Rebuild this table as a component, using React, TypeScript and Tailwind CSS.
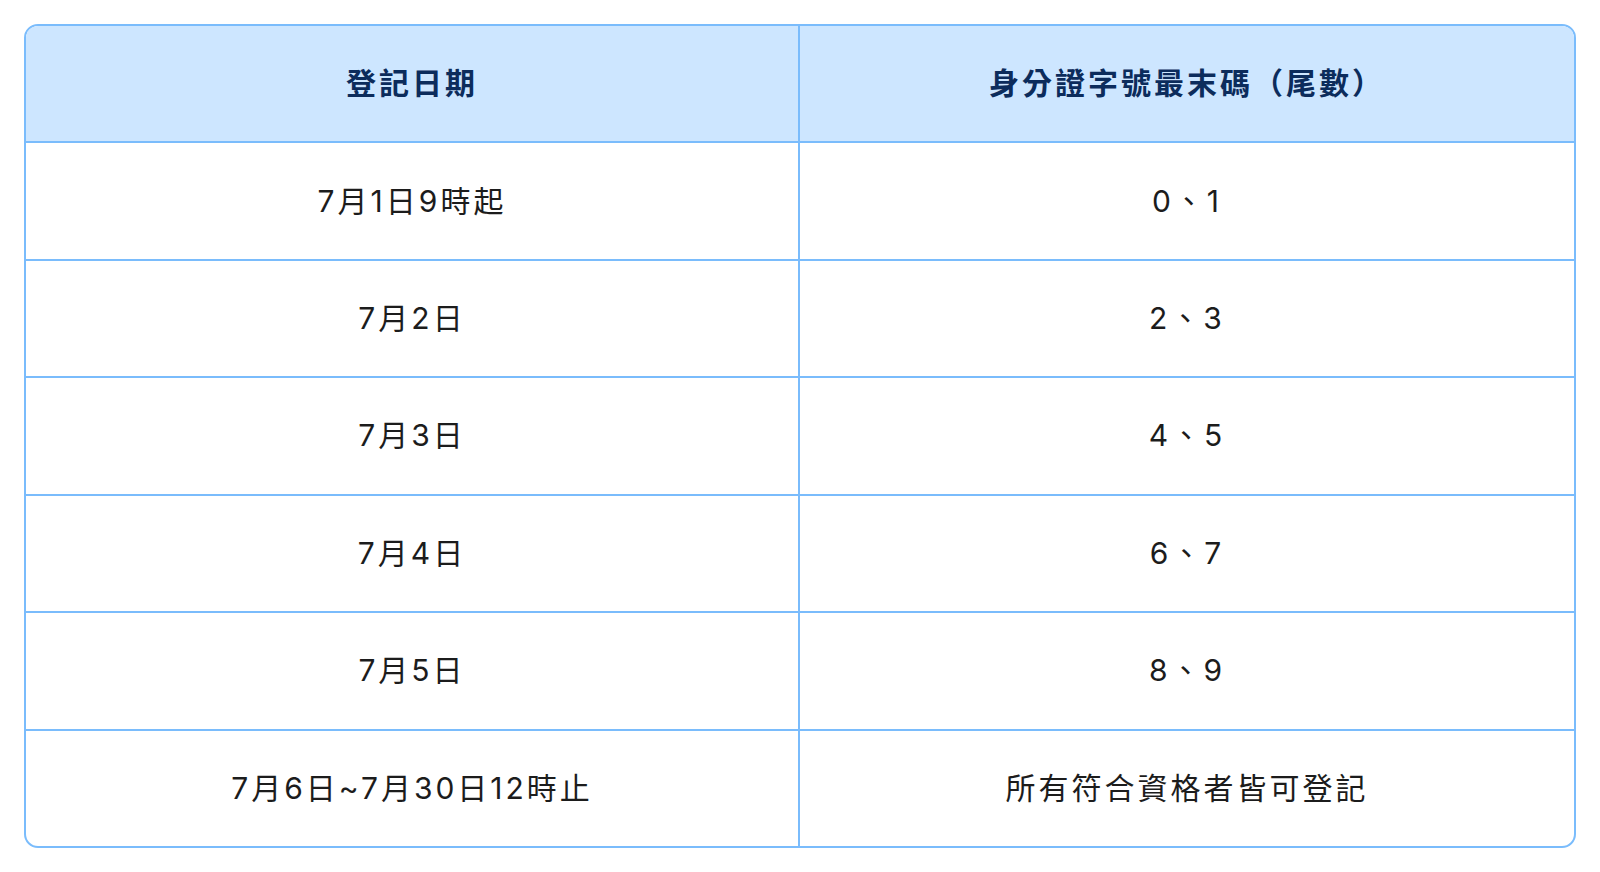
import React from 'react';

const rows: [string, string][] = [
  ['7月1日9時起', '0、1'],
  ['7月2日', '2、3'],
  ['7月3日', '4、5'],
  ['7月4日', '6、7'],
  ['7月5日', '8、9'],
  ['7月6日~7月30日12時止', '所有符合資格者皆可登記'],
];

export default function App() {
  return (
    <div
      className="min-h-screen bg-white p-6"
      style={{ fontFamily: '"Inter", "Noto Sans CJK TC", sans-serif' }}
    >
      <div className="flex h-[824px] flex-col overflow-hidden rounded-[14px] border-2 border-[#7abcfc]">
        <div className="grid flex-1 grid-cols-2 bg-[#cde6ff] text-[30px] font-bold tracking-[0.1em] text-[#0c2c5c]">
          <div className="flex items-center justify-center border-r-2 border-[#7abcfc]">登記日期</div>
          <div className="flex items-center justify-center">身分證字號最末碼（尾數）</div>
        </div>
        {rows.map(([date, digits]) => (
          <div
            key={date}
            className="grid flex-1 grid-cols-2 border-t-2 border-[#7abcfc] text-[30px] tracking-[0.1em] text-[#1c1c1c]"
          >
            <div className="flex items-center justify-center border-r-2 border-[#7abcfc]">{date}</div>
            <div className="flex items-center justify-center">{digits}</div>
          </div>
        ))}
      </div>
    </div>
  );
}
